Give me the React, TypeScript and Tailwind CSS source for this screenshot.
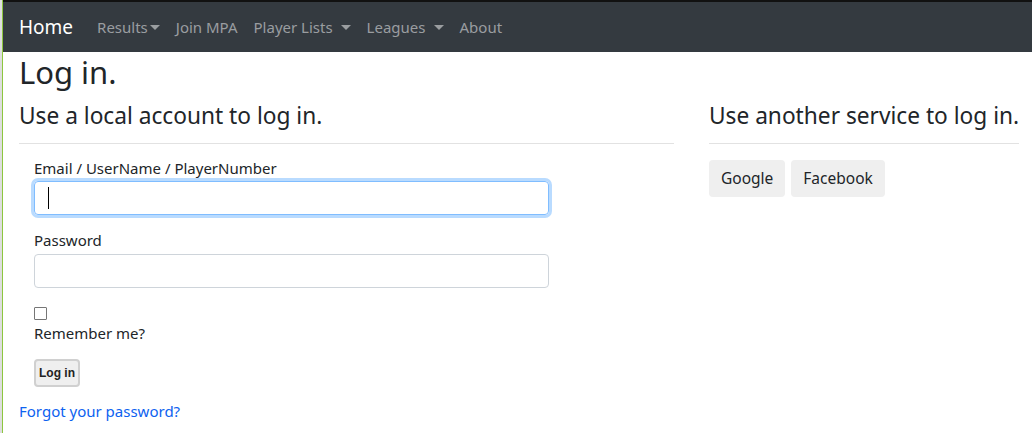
import React from 'react';

const navItems = [
  { label: 'Results', caret: true, tight: true },
  { label: 'Join MPA', caret: false, tight: false },
  { label: 'Player Lists', caret: true, tight: false },
  { label: 'Leagues', caret: true, tight: false },
  { label: 'About', caret: false, tight: false },
];

function Caret({ tight }: { tight: boolean }) {
  return (
    <span
      className={`inline-block align-middle border-x-[5px] border-t-[5px] border-x-transparent border-t-current ${tight ? 'ml-[2px]' : 'ml-[8px]'}`}
    />
  );
}

export default function App() {
  return (
    <div className="flex h-[433px] w-[1032px] overflow-hidden bg-white text-[#212529] font-['Noto_Sans',sans-serif]">
      {/* leftover strip of the window behind */}
      <div className="w-[2px] bg-[#dedede]" />
      <div className="w-[1px] bg-[#8dc63f]" />

      <div className="flex-1 flex flex-col">
        <div className="h-[2px] bg-[#111]" />
        <nav className="h-[50px] bg-[#343a40] flex items-center pl-[16px]">
          <span className="text-[19px] text-white mr-[16px]">Home</span>
          {navItems.map((item) => (
            <span key={item.label} className="px-2 text-[15px] text-[#9a9da0] flex items-center">
              {item.label}
              {item.caret && <Caret tight={item.tight} />}
            </span>
          ))}
        </nav>

        <main className="pl-[16px] pt-[2px]">
          <h2 className="text-[31px] leading-[1.2] mb-[11px]">Log in.</h2>
          <div className="flex gap-[35px]">
            <section className="w-[655px]">
              <h4 className="text-[22.7px] leading-[1.2] mb-[8px] whitespace-nowrap">Use a local account to log in.</h4>
              <hr className="border-[#e2e2e2] mt-[14px] mb-[14px]" />
              <form className="pl-[15px]">
                <label className="block text-[15px] leading-[20px]">Email / UserName / PlayerNumber</label>
                <div className="w-[515px] h-[34px] mt-[3px] rounded-[4px] border border-[#80bdff] ring-[3px] ring-[#b9dbff] flex items-center pl-[13px]">
                  <span className="w-[1px] h-[22px] bg-black" />
                </div>
                <label className="block text-[15px] leading-[20px] mt-[15px] mb-[4px]">Password</label>
                <div className="w-[515px] h-[34px] rounded-[4px] border border-[#ced4da]" />
                <div className="mt-[19px] w-[13px] h-[13px] border border-[#767676] rounded-[1px]" />
                <div className="text-[15px] leading-[20px] mt-[3px]">Remember me?</div>
                <button
                  type="button"
                  className="mt-[16px] h-[28px] px-[3px] rounded-[4px] border-2 border-[#d0d0d0] bg-[#efefef] text-[12px] font-bold font-['Liberation_Sans',sans-serif] text-[#222]"
                >
                  Log in
                </button>
              </form>
              <a className="block mt-[14px] text-[15px] leading-[20px] text-[#0d62f0]">Forgot your password?</a>
            </section>

            <section className="w-[310px]">
              <h4 className="text-[22.7px] leading-[1.2] mb-[8px] whitespace-nowrap">Use another service to log in.</h4>
              <hr className="border-[#e2e2e2] mt-[14px] mb-[16px]" />
              <div className="flex gap-[6px]">
                <button type="button" className="h-[37px] px-[12px] rounded-[4px] bg-[#efefef] text-[15.5px]">Google</button>
                <button type="button" className="h-[37px] px-[12px] rounded-[4px] bg-[#efefef] text-[15.5px]">Facebook</button>
              </div>
            </section>
          </div>
        </main>
      </div>
    </div>
  );
}
